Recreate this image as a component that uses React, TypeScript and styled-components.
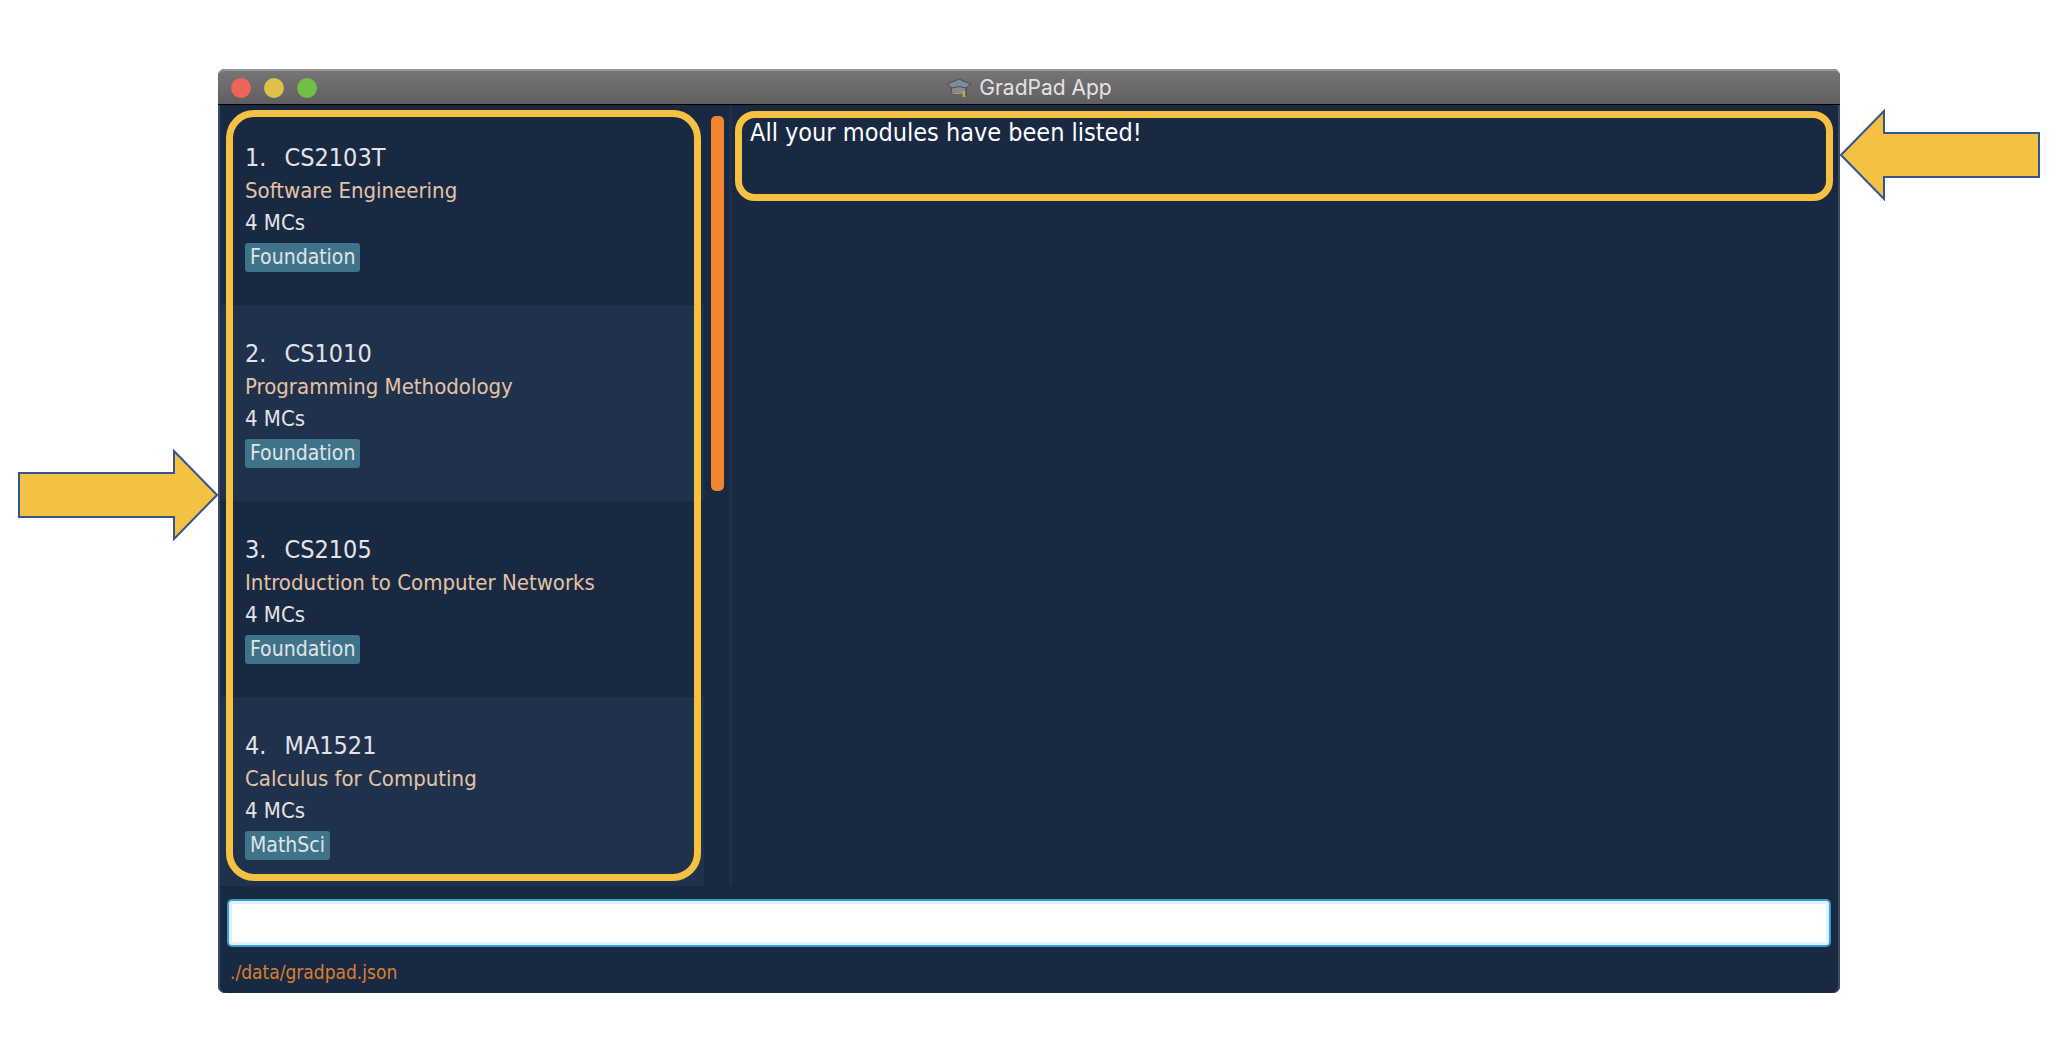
import React from "react";
import styled, { createGlobalStyle } from "styled-components";

const GlobalStyle = createGlobalStyle`
  * { box-sizing: border-box; }
  body {
    margin: 0;
    background: #ffffff;
    font-family: "DejaVu Sans Condensed", "Noto Sans", sans-serif;
  }
`;

const Page = styled.main`
  height: 100vh;
  min-height: 600px;
  padding: 69px 226px 67px 218px;
  display: flex;
`;

const AppWindow = styled.section`
  position: relative;
  flex: 1;
  min-width: 0;
  display: flex;
  flex-direction: column;
  background: #1a2942;
  border-radius: 7px;
  box-shadow: inset 2px 0 #3c4a63, inset -2px 0 #3c4a63;
`;

const TitleBar = styled.header`
  height: 36px;
  flex: none;
  display: grid;
  grid-template-columns: 1fr auto 1fr;
  align-items: center;
  padding: 0 13px;
  border-top: 2px solid #949494;
  border-bottom: 1px solid #000000;
  border-radius: 7px 7px 0 0;
  background: linear-gradient(#767475, #605e5e);
`;

const Controls = styled.div`
  display: flex;
  gap: 13px;
`;

const WindowButton = styled.button<{ $color: string }>`
  width: 20px;
  height: 20px;
  padding: 0;
  border: 0;
  border-radius: 50%;
  background: ${(p) => p.$color};
`;

const AppTitle = styled.h1`
  margin: 0;
  display: flex;
  align-items: center;
  gap: 7px;
  font: 400 21px/28px Inter, sans-serif;
  color: #e4e3e4;
`;

const Panels = styled.div`
  flex: 1;
  min-height: 0;
  display: flex;
  padding: 1px 7px 0 2px;
`;

const ListPane = styled.section`
  position: relative;
  flex: 0 0 509px;
  display: flex;
  gap: 7px;
  padding-top: 3px;
`;

const ModuleList = styled.ol`
  flex: 0 0 484px;
  margin: 0;
  padding: 0;
  overflow: hidden;
  list-style: none;
`;

const ModuleRow = styled.li`
  height: 196px;
  padding: 32px 25px 0;
  background: #1a2942;
  color: #e2e4e8;
  &:nth-child(even) { background: #20314c; }
`;

const ModuleCode = styled.h2`
  margin: 0;
  display: flex;
  gap: 18px;
  font-size: 25px;
  font-weight: 400;
  line-height: 34px;
`;

const ModuleText = styled.p<{ $color?: string }>`
  margin: 0;
  font-size: 22px;
  line-height: 32px;
  color: ${(p) => p.$color || "inherit"};
`;

const Tag = styled.span`
  display: inline-block;
  margin-top: 4px;
  padding: 0 5px;
  border-radius: 3px;
  background: #3e7389;
  font-size: 21px;
  line-height: 29px;
`;

const ScrollThumb = styled.div`
  flex: 0 0 13px;
  height: 375px;
  margin-top: 7px;
  border-radius: 5px;
  background: #f08631;
`;

const Divider = styled.div`
  flex: 0 0 3px;
  background: #20304a;
`;

const ResultPane = styled.section`
  position: relative;
  flex: 1;
  min-width: 0;
  padding: 11px 18px;
  color: #ffffff;
`;

const ResultText = styled.output`
  display: block;
  font-size: 25px;
  line-height: 32px;
`;

const Highlight = styled.div<{ $inset: string; $height?: number; $radius: number }>`
  position: absolute;
  inset: ${(p) => p.$inset};
  height: ${(p) => (p.$height ? `${p.$height}px` : "auto")};
  border: 7px solid #f5c142;
  border-radius: ${(p) => p.$radius}px;
  pointer-events: none;
`;

const CommandInput = styled.input`
  flex: none;
  height: 48px;
  margin: 13px 9px 0;
  padding: 0 12px;
  border: 2px solid #3c9bd0;
  border-radius: 5px;
  outline: 0;
  background: #ffffff;
  box-shadow: inset 0 0 0 3px #dff2fa;
  font: inherit;
  font-size: 22px;
`;

const StatusBar = styled.footer`
  flex: none;
  height: 46px;
  padding: 11px 12px 0;
  font-size: 19px;
  line-height: 28px;
  color: #d9802b;
`;

const Arrow = styled.svg<{ $side: "left" | "right" }>`
  position: absolute;
  top: ${(p) => (p.$side === "left" ? 380 : 40)}px;
  ${(p) => (p.$side === "left" ? "right" : "left")}: 100%;
  transform: ${(p) => (p.$side === "left" ? "none" : "scaleX(-1)")};
`;

const CalloutArrow = ({ side }: { side: "left" | "right" }) => (
  <Arrow $side={side} width="200" height="92" viewBox="0 0 200 92" aria-hidden="true">
    <path d="M1 24H156V2L199 46L156 90V68H1Z" fill="#f5c142" stroke="#34558f" strokeWidth="2" />
  </Arrow>
);

const CapIcon = () => (
  <svg width="26" height="20" viewBox="0 0 26 20" aria-hidden="true">
    <path d="M6 8L5 14Q13 18 20 14V8Z" fill="#858b94" stroke="#4b4e53" />
    <path d="M6 15Q13 17 19 14" fill="none" stroke="#b8a662" />
    <path d="M1 6Q7 4 13 1Q19 4 25 6Q21 9 20 10Q13 7 6 10Q4 8 1 6Z" fill="#858b94" stroke="#4b4e53" />
    <path d="M18 13V19" fill="none" stroke="#b8a662" strokeWidth="3" />
    <path d="M20 10V18" fill="none" stroke="#4b4e53" />
  </svg>
);

const modules = [
  { code: "CS2103T", name: "Software Engineering", tag: "Foundation" },
  { code: "CS1010", name: "Programming Methodology", tag: "Foundation" },
  { code: "CS2105", name: "Introduction to Computer Networks", tag: "Foundation" },
  { code: "MA1521", name: "Calculus for Computing", tag: "MathSci" },
];

export default function App() {
  return (
    <>
      <GlobalStyle />
      <Page>
        <AppWindow>
          <TitleBar>
            <Controls>
              <WindowButton $color="#ed6559" aria-label="Close" />
              <WindowButton $color="#dfc04d" aria-label="Minimize" />
              <WindowButton $color="#71bf48" aria-label="Zoom" />
            </Controls>
            <AppTitle>
              <CapIcon />
              GradPad App
            </AppTitle>
          </TitleBar>
          <Panels>
            <ListPane>
              <ModuleList>
                {modules.map((m, i) => (
                  <ModuleRow key={m.code}>
                    <ModuleCode>
                      <span>{i + 1}.</span>
                      <span>{m.code}</span>
                    </ModuleCode>
                    <ModuleText $color="#e3c3a6">{m.name}</ModuleText>
                    <ModuleText>4 MCs</ModuleText>
                    <Tag>{m.tag}</Tag>
                  </ModuleRow>
                ))}
              </ModuleList>
              <ScrollThumb />
              <Highlight $inset="4px 28px 5px 6px" $radius={28} />
            </ListPane>
            <Divider />
            <ResultPane>
              <ResultText>All your modules have been listed!</ResultText>
              <Highlight $inset="5px 0 auto 3px" $height={90} $radius={20} />
            </ResultPane>
          </Panels>
          <CommandInput aria-label="Command" />
          <StatusBar>./data/gradpad.json</StatusBar>
          <CalloutArrow side="left" />
          <CalloutArrow side="right" />
        </AppWindow>
      </Page>
    </>
  );
}
